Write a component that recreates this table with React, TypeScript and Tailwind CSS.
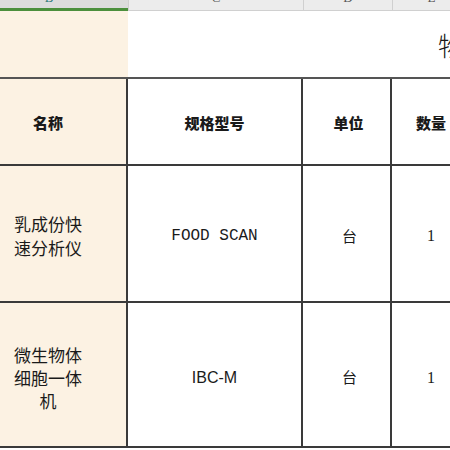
const cream = 'bg-[#fcf2e3]';

const App = () => {
  return (
    <div className="w-[450px] h-[450px] overflow-hidden bg-white font-['Noto_Sans_CJK_SC',sans-serif] text-[#1a1a1a]">
      {/* column letters strip */}
      <div className="flex h-[11px] w-[520px] overflow-hidden font-['Liberation_Serif',serif] text-[13px] text-[#555]">
        <div className="flex w-[128px] shrink-0 justify-center border-b-[3px] border-[#4b8f3c] bg-[#dcdcdc] pr-[30px] text-[#2d7a7a]">
          <span className="-mt-[9px] leading-[13px]">B</span>
        </div>
        <div className="flex w-[175px] shrink-0 justify-center border-b border-l border-[#d0d0d0] bg-[#ececec]">
          <span className="-mt-[9px] leading-[13px]">C</span>
        </div>
        <div className="flex w-[89px] shrink-0 justify-center border-b border-l border-[#d0d0d0] bg-[#ececec]">
          <span className="-mt-[9px] leading-[13px]">D</span>
        </div>
        <div className="flex w-[78px] shrink-0 justify-center border-b border-l border-[#d0d0d0] bg-[#ececec]">
          <span className="-mt-[9px] leading-[13px]">E</span>
        </div>
      </div>

      {/* title row */}
      <div className="flex h-[68px] w-[520px] border-b-2 border-[#555]">
        <div className={`w-[128px] shrink-0 ${cream}`} />
        <div className="flex flex-1 items-center pl-[310px] pt-[2px]">
          <span className="whitespace-nowrap text-[26px] font-light leading-none">物资采购清单</span>
        </div>
      </div>

      {/* header row */}
      <div className="flex h-[87px] w-[520px] border-b-2 border-[#3a3a3a] text-[15px] font-black">
        <div className={`flex w-[128px] shrink-0 items-center justify-center border-r-2 border-[#3a3a3a] pr-[30px] pt-[4px] ${cream}`}>
          名称
        </div>
        <div className="flex w-[175px] shrink-0 items-center justify-center border-r-2 border-[#3a3a3a] pt-[4px]">
          规格型号
        </div>
        <div className="flex w-[89px] shrink-0 items-center justify-center border-r-2 border-[#3a3a3a] pt-[4px] pl-[4px]">
          单位
        </div>
        <div className="flex w-[78px] shrink-0 items-center justify-center pt-[4px]">
          数量
        </div>
      </div>

      {/* row 1 */}
      <div className="flex h-[137px] w-[520px] border-b-2 border-[#3a3a3a]">
        <div className={`flex w-[128px] shrink-0 items-center justify-center border-r-2 border-[#3a3a3a] pr-[30px] pt-[5px] ${cream}`}>
          <div className="w-[70px] text-center text-[17px] leading-[24px]">乳成份快速分析仪</div>
        </div>
        <div className="flex w-[175px] shrink-0 items-center justify-center border-r-2 border-[#3a3a3a] pt-[5px] font-['Liberation_Mono',monospace] text-[16px]">
          FOOD SCAN
        </div>
        <div className="flex w-[89px] shrink-0 items-center justify-center border-r-2 border-[#3a3a3a] pt-[5px] pl-[6px] text-[15px]">
          台
        </div>
        <div className="flex w-[78px] shrink-0 items-center justify-center pt-[5px] font-['Liberation_Serif',serif] text-[16px]">
          1
        </div>
      </div>

      {/* row 2 */}
      <div className="flex h-[145px] w-[520px] border-b-2 border-[#3a3a3a]">
        <div className={`flex w-[128px] shrink-0 items-center justify-center border-r-2 border-[#3a3a3a] pr-[30px] pt-[6px] ${cream}`}>
          <div className="w-[70px] text-center text-[17px] leading-[23px]">微生物体细胞一体机</div>
        </div>
        <div className="flex w-[175px] shrink-0 items-center justify-center border-r-2 border-[#3a3a3a] pt-[6px] font-['Liberation_Sans',sans-serif] text-[16px]">
          IBC-M
        </div>
        <div className="flex w-[89px] shrink-0 items-center justify-center border-r-2 border-[#3a3a3a] pt-[6px] pl-[6px] text-[15px]">
          台
        </div>
        <div className="flex w-[78px] shrink-0 items-center justify-center pt-[6px] font-['Liberation_Serif',serif] text-[16px]">
          1
        </div>
      </div>
    </div>
  );
};

export default App;
